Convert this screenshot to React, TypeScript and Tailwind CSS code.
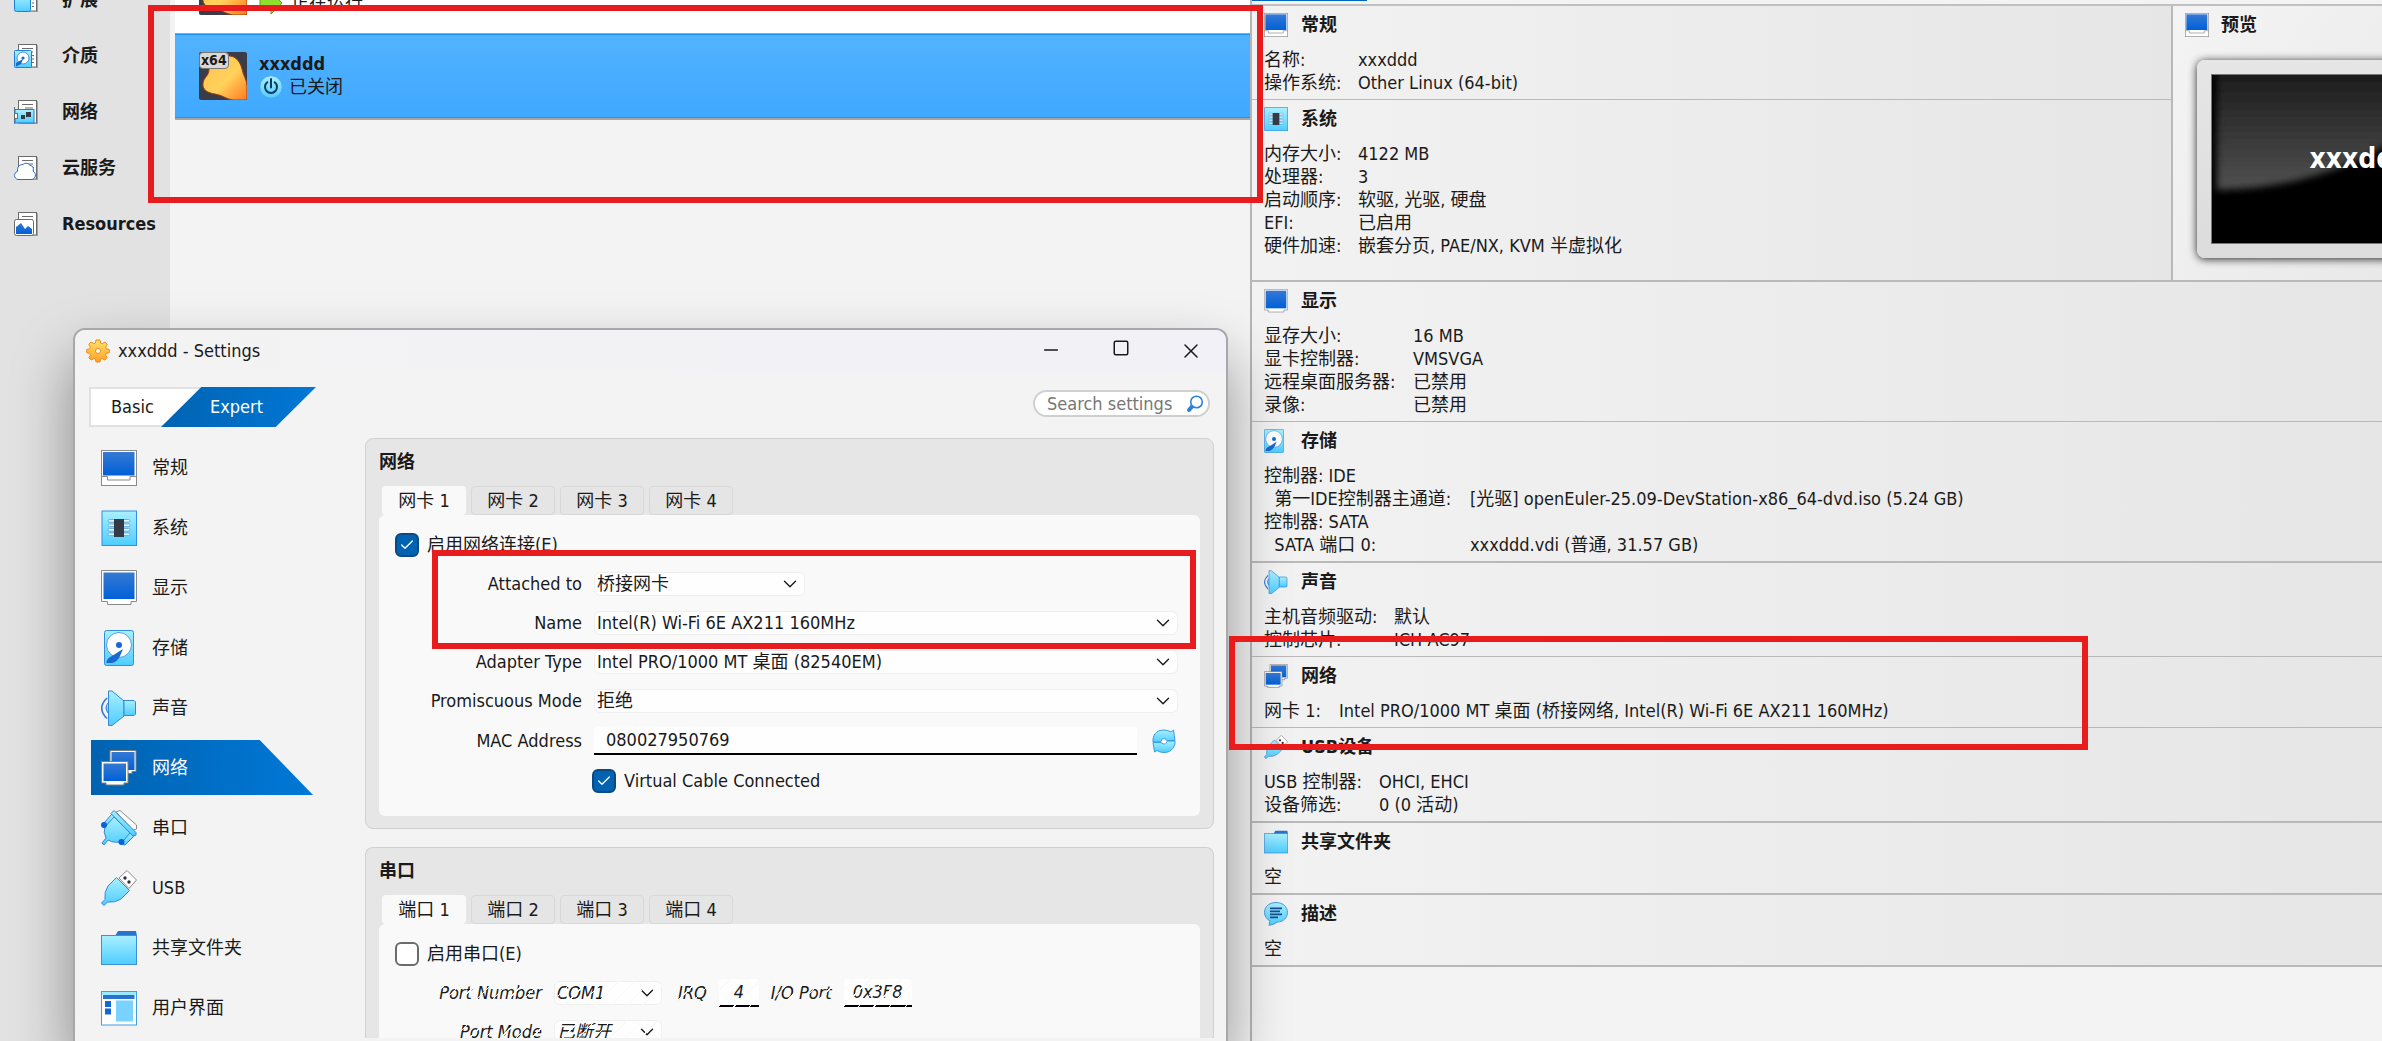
import type { ReactNode } from "react";
import { Check, ChevronDown, Minus, Square, X } from "lucide-react";

type IconProps = { className?: string };

/* Shared gradients, referenced by id from every icon below */
function IconDefs() {
  return (
    <svg width="0" height="0" className="absolute" aria-hidden="true">
      <defs>
        <linearGradient id="cyan" x1="0" y1="0" x2="0" y2="1">
          <stop offset="0" stopColor="#a9f0ff" />
          <stop offset="1" stopColor="#4fcdff" />
        </linearGradient>
        <linearGradient id="navy" x1="0" y1="0" x2="0" y2="1">
          <stop offset="0" stopColor="#3579d3" />
          <stop offset="1" stopColor="#0060d8" />
        </linearGradient>
        <linearGradient id="gold" x1="0" y1="0" x2="1" y2="1">
          <stop offset="0" stopColor="#ffbf4d" />
          <stop offset="0.55" stopColor="#ffd25c" />
          <stop offset="1" stopColor="#ff7a1c" />
        </linearGradient>
        <linearGradient id="gear" x1="0" y1="0" x2="0" y2="1">
          <stop offset="0" stopColor="#ffe36b" />
          <stop offset="1" stopColor="#ffa023" />
        </linearGradient>
      </defs>
    </svg>
  );
}

function GeneralIcon({ className }: IconProps) {
  return (
    <svg viewBox="0 0 36 36" className={className} aria-hidden="true">
      <rect x="0.5" y="0.5" width="35" height="35" fill="#fff" stroke="#8a8a8a" />
      <rect x="2" y="2" width="31.500" height="23.500" fill="url(#navy)" />
      <path d="M0.500 26.500H6.500V30H29V26.500H35.500" fill="none" stroke="#8a8a8a" />
    </svg>
  );
}

function DisplayIcon({ className }: IconProps) {
  return (
    <svg viewBox="0 0 36 36" className={className} aria-hidden="true">
      <path d="M0.500 0.500H35.500V31.500H30V34.500H6.500V31.500H0.500Z" fill="#fff" stroke="#8a8a8a" />
      <rect x="2.500" y="2.500" width="31" height="26.500" fill="url(#navy)" />
    </svg>
  );
}

function ChipIcon({ className }: IconProps) {
  return (
    <svg viewBox="0 0 36 36" className={className} aria-hidden="true">
      <rect x="1" y="1" width="34.500" height="34.500" fill="url(#cyan)" stroke="#2f8fe0" />
      {[9, 13.5, 18, 22.5].map((y) => (
        <rect key={y} x="7" y={y + 0.5} width="22" height="2.600" rx="1.300" fill="#e9f8ff" stroke="#5a9fd4" strokeWidth="0.800" />
      ))}
      <rect x="13" y="9" width="10" height="18" fill="#343b47" />
    </svg>
  );
}

function DiskIcon({ className }: IconProps) {
  return (
    <svg viewBox="0 0 30 36" className={className} aria-hidden="true">
      <rect x="0.500" y="0.500" width="29" height="35" rx="2" fill="url(#cyan)" stroke="#2f8fe0" />
      <circle cx="15" cy="15" r="12.500" fill="#fff" stroke="#5b9bd8" />
      <path d="M19 19 16 26Q13 32 8 33L2.500 33Q2 29 8 26Z" fill="#1668d2" />
      <circle cx="15" cy="15" r="3" fill="#1668d2" />
    </svg>
  );
}

function SpeakerIcon({ className }: IconProps) {
  return (
    <svg viewBox="0 0 36 36" className={className} aria-hidden="true">
      <path d="M6 8Q-4.500 18 6 28.500" fill="none" stroke="#2d77d8" strokeWidth="1.600" />
      <path d="M8 13H7Q3 18 7 23H8Z" fill="url(#cyan)" stroke="#2d77d8" />
      <path d="M7.500 1H11L23 11V26L11 35.500H7.500Z" fill="url(#cyan)" stroke="#3587d8" />
      <path d="M23 10.500H33L34.500 12V24L33 25.500H23Z" fill="url(#cyan)" stroke="#3587d8" />
    </svg>
  );
}

function NetworkIcon({ className }: IconProps) {
  return (
    <svg viewBox="0 0 36 36" className={className} aria-hidden="true">
      <path d="M9 0.500H35V21.500H31V23.500H9Z" fill="#fff" stroke="#7c7c7c" />
      <rect x="10.500" y="2" width="23" height="18" fill="url(#navy)" />
      <path d="M0.500 11.500H27V33H23V35H5V33H0.500Z" fill="#fff" stroke="#7c7c7c" />
      <rect x="2.500" y="13.500" width="22.500" height="17.500" fill="url(#navy)" />
    </svg>
  );
}

function SerialIcon({ className }: IconProps) {
  return (
    <svg viewBox="0 0 36 36" className={className} aria-hidden="true">
      <path d="M15 2 19 0.500 35.500 15V19L32 20Z" fill="#fff" stroke="#8a8a8a" />
      <path d="M2 17V14L11 4 16 8 6 18Z" fill="url(#cyan)" stroke="#3587d8" />
      <path d="M30 21 34 25 24 35 19 34V30Z" fill="url(#cyan)" stroke="#3587d8" />
      <path d="M13 7 29 23 22 31Q14 34 7 30L3 35 1 33 5 28Q2 22 4 17Z" fill="url(#cyan)" stroke="#3587d8" />
      <path d="M10 3.500 13 0.500 35 22.500V25L32 26Z" fill="url(#cyan)" stroke="#3587d8" />
      <circle cx="3" cy="15" r="3" fill="#0a62d6" />
      <circle cx="20.500" cy="32" r="3" fill="#0a62d6" />
    </svg>
  );
}

function UsbIcon({ className }: IconProps) {
  return (
    <svg viewBox="0 0 36 36" className={className} aria-hidden="true">
      <path d="M18 8 26 0.500 35.500 10 28 18.500Z" fill="#fff" stroke="#8a8a8a" />
      <circle cx="24" cy="8" r="1.700" fill="#333" />
      <circle cx="28" cy="12" r="1.700" fill="#333" />
      <path d="M15.500 7.500 28.500 20.500 20 29Q14 33 6.500 32L3 35.500 0.500 33 4 29.500Q3 22 7 16Z" fill="url(#cyan)" stroke="#3587d8" />
    </svg>
  );
}

function FolderIcon({ className }: IconProps) {
  return (
    <svg viewBox="0 0 36 36" className={className} aria-hidden="true">
      <path d="M14 6 17 1H35L36 6Z" fill="#2a72d0" />
      <rect x="0.500" y="5.500" width="35" height="29" fill="url(#cyan)" stroke="#3f8ed8" />
    </svg>
  );
}

function InterfaceIcon({ className }: IconProps) {
  return (
    <svg viewBox="0 0 36 36" className={className} aria-hidden="true">
      <rect x="0.500" y="1.500" width="35" height="33.500" fill="#fff" stroke="#3f9fe0" />
      <rect x="1" y="2" width="34" height="3" fill="#9beaff" />
      <rect x="2" y="5" width="31.500" height="4" fill="#2a72d0" />
      <rect x="4" y="11" width="6" height="6" fill="#1668d2" />
      <rect x="4" y="18.500" width="6" height="6" fill="#1668d2" />
      <rect x="15" y="10.500" width="17" height="21" fill="#79d2ff" />
    </svg>
  );
}

function DescriptionIcon({ className }: IconProps) {
  return (
    <svg viewBox="0 0 36 36" className={className} aria-hidden="true">
      <path d="M18 0.800C28 0.800 35.200 7 35.200 15.500C35.200 24 29 30 20 30Q15 34 7.500 35L9 28.500C4 26 0.800 21 0.800 15.500C0.800 7 8 0.800 18 0.800Z" fill="url(#cyan)" stroke="#4a97dc" strokeWidth="1.500" />
      <path d="M9 9.500H27M9 14H24M9 18.500H27M9 23H21" stroke="#184f8c" strokeWidth="2.800" />
    </svg>
  );
}

function GearIcon({ className }: IconProps) {
  return (
    <svg viewBox="0 0 24 24" className={className} aria-hidden="true">
      <path
        d="M10 1h4l.6 3 1.600.7L19 3l2.300 2.400-1.600 2.700.6 1.700 3 .7v3.200l-3 .7-.7 1.700 1.500 2.600-2.300 2.400-2.700-1.600-1.600.7L14 23h-4l-.6-2.800-1.600-.7-2.700 1.600-2.300-2.400 1.600-2.600-.7-1.700-3-.7v-3.200l3-.7.6-1.700-1.600-2.700L5 3l2.800 1.700 1.600-.7z"
        fill="url(#gear)"
        stroke="#f08a1d"
      />
      <circle cx="12" cy="12" r="2.500" fill="#fff" stroke="#f08a1d" />
    </svg>
  );
}

function PowerIcon({ className }: IconProps) {
  return (
    <svg viewBox="0 0 24 24" className={className} aria-hidden="true">
      <circle cx="12" cy="12" r="11.300" fill="url(#cyan)" stroke="#4fa6e6" />
      <path d="M8.300 7.200A6 6 0 1 0 15.700 7.200M12 4V12.500" fill="none" stroke="#10385f" strokeWidth="2" strokeLinecap="round" />
    </svg>
  );
}

function RunningIcon({ className }: IconProps) {
  return (
    <svg viewBox="0 0 24 24" className={className} aria-hidden="true">
      <path d="M1 7H12V1L23 12 12 23V17H1Z" fill="#8fe02c" stroke="#5da312" />
    </svg>
  );
}

function MagnifierIcon({ className }: IconProps) {
  return (
    <svg viewBox="0 0 18 18" className={className} aria-hidden="true">
      <path d="M6.500 11 3 15" stroke="#2b7ed9" strokeWidth="4" strokeLinecap="round" />
      <circle cx="10.500" cy="7" r="5.800" fill="#fff" stroke="#2b7ed9" strokeWidth="1.600" />
    </svg>
  );
}

function RefreshIcon({ className }: IconProps) {
  return (
    <svg viewBox="0 0 24 24" className={className} aria-hidden="true">
      <path d="M1 13V10C2 4 6 1 12 1Q16 1 19 3L21.500 1 23 11.500H15Q13 8.500 10 10L9 13Z" fill="url(#cyan)" stroke="#3b9ae0" />
      <path d="M23 12V14C22 20 18 23.500 12 23.500Q8 23.500 5 21.500L2.500 23 1 13.500H9Q11 16 14 14.500L15 12Z" fill="url(#cyan)" stroke="#3b9ae0" />
      <path d="M9 13 11 10 12 12 15 12 13 15 12 13Z" fill="#fff" />
    </svg>
  );
}

function VmIcon({ className }: IconProps) {
  return (
    <svg viewBox="0 0 48 48" className={className} aria-hidden="true">
      <rect width="48" height="48" rx="2" fill="#3a3d49" />
      <path d="M28 4C36 3 41 9 43 17C44 23 48 28 48 34V48H34C27 47 23 43 16 42C9 41 3 38 4 31C5 25 10 24 10 17C10 9 18 5 28 4Z" fill="url(#gold)" stroke="#9c3d12" />
    </svg>
  );
}

/* A sheet of paper with the tool's own mark laid over its left half */
function ToolIcon({ children }: { children: ReactNode }) {
  return (
    <svg viewBox="0 0 24 24" className="h-6 w-6 shrink-0" aria-hidden="true">
      <path d="M5.500 1.500H23.500V24H7" fill="none" stroke="#a5a5a5" />
      <rect x="4.500" y="0.500" width="18" height="22.500" fill="#fff" stroke="#6b6b6b" />
      <path d="M8 4.500H19M11 8H19M18 11.500H20M18 15H20M18 18.500H20" stroke="#6b6b6b" />
      {children}
    </svg>
  );
}

const tools = [
  {
    label: "扩展",
    icon: <rect x="0.500" y="6.500" width="16" height="17" rx="2" fill="url(#cyan)" stroke="#1f7fd6" />,
  },
  {
    label: "介质",
    icon: (
      <>
        <rect x="0.500" y="6.500" width="17" height="17" rx="1" fill="url(#cyan)" stroke="#1f7fd6" />
        <circle cx="9" cy="14" r="6" fill="#fff" stroke="#4b8fd8" />
        <path d="M9 15 7 20 2 22.500V19Z" fill="#1668d2" />
        <circle cx="9" cy="14" r="1.600" fill="#1668d2" />
      </>
    ),
  },
  {
    label: "网络",
    icon: (
      <>
        <path d="M0.500 7V24" stroke="#6b6b6b" />
        <rect x="1" y="9.500" width="19" height="13.500" fill="url(#cyan)" stroke="#1f7fd6" />
        <rect x="0.500" y="13.500" width="3" height="5" fill="#fff" stroke="#6b6b6b" />
        <rect x="12" y="12" width="5" height="5" fill="#333a44" />
        <rect x="7" y="15" width="4" height="4" fill="#333a44" />
      </>
    ),
  },
  {
    label: "云服务",
    icon: (
      <path
        d="M4 23.500C-0.500 22.500-0.500 16.500 3.500 15.500C3 10 6 8.500 9 8.500C11 6.500 15 7 16 9.500C19 9.500 20 12.500 19 15C23 18 21.500 22.500 18 23.500Z"
        fill="#fff"
        stroke="#1f6fd2"
      />
    ),
  },
  {
    label: "Resources",
    icon: (
      <>
        <rect x="0.500" y="7.500" width="19" height="16" rx="2" fill="#fff" stroke="#6b6b6b" />
        <path d="M2 22V15L7 11 11 17 14 14 18 17V22Z" fill="url(#navy)" />
      </>
    ),
  },
];

const settingsPages = [
  { label: "常规", Icon: GeneralIcon },
  { label: "系统", Icon: ChipIcon },
  { label: "显示", Icon: DisplayIcon },
  { label: "存储", Icon: DiskIcon },
  { label: "声音", Icon: SpeakerIcon },
  { label: "网络", Icon: NetworkIcon },
  { label: "串口", Icon: SerialIcon },
  { label: "USB", Icon: UsbIcon },
  { label: "共享文件夹", Icon: FolderIcon },
  { label: "用户界面", Icon: InterfaceIcon },
];

function ToolsSidebar() {
  return (
    <nav className="w-[170px] shrink-0 bg-[#e2e2e2]">
      <div className="-mt-7 flex flex-col">
        {tools.map((tool) => (
          <a key={tool.label} href="#tools" className="flex h-14 items-center gap-6 pl-3.5 font-bold">
            <ToolIcon>{tool.icon}</ToolIcon>
            {tool.label}
          </a>
        ))}
      </div>
    </nav>
  );
}

function MachineList() {
  return (
    <main className="min-w-0 flex-1 pl-[5px]">
      <div className="flex h-[33px] items-end gap-3 bg-white pb-[18px] pl-6">
        <VmIcon className="h-12 w-12 shrink-0" />
        <div className="flex items-center gap-2">
          <RunningIcon className="h-6 w-6" />
          <span>正在运行</span>
        </div>
      </div>
      <div className="border-t border-b-2 border-[#a5a5a5]">
        <a
          href="#machine"
          className="flex h-[84px] items-center gap-3 border-y border-[#1592fb] bg-linear-to-b from-[#52b2ff] to-[#3fa9ff] pl-6"
        >
          <span className="relative shrink-0">
            <VmIcon className="h-12 w-12" />
            <span className="absolute top-0 left-0 rounded border border-[#777] bg-[#dcd9d4] px-px text-[14px] leading-[15px] font-bold">
              x64
            </span>
          </span>
          <span className="flex flex-col">
            <span className="leading-[22px] font-bold">xxxddd</span>
            <span className="flex items-center gap-1.5">
              <PowerIcon className="h-6 w-6" />
              已关闭
            </span>
          </span>
        </a>
      </div>
    </main>
  );
}

type Row = [string, string?];

type DetailSectionProps = {
  title: string;
  icon: ReactNode;
  rows: Row[];
  labelWidth?: string;
  className?: string;
};

function DetailSection({ title, icon, rows, labelWidth = "w-[94px]", className = "border-b" }: DetailSectionProps) {
  return (
    <section
      className={`border-[#b9b9b9] bg-linear-to-r from-[#f2f2f2] to-[#e6e6e6] pt-[7px] pb-[5px] pl-3 ${className}`}
    >
      <h2 className="flex h-6 items-center font-bold">
        <span className="w-[37px]">{icon}</span>
        {title}
      </h2>
      <table className="mt-[11px] leading-[23px]">
        <tbody>
          {rows.map(([label, value]) =>
            value ? (
              <tr key={label}>
                <th scope="row" className={`p-0 text-left font-normal whitespace-pre ${labelWidth}`}>
                  {label}
                </th>
                <td className="p-0 whitespace-nowrap">{value}</td>
              </tr>
            ) : (
              <tr key={label}>
                <td colSpan={2} className="p-0">
                  {label}
                </td>
              </tr>
            ),
          )}
        </tbody>
      </table>
    </section>
  );
}

function Preview() {
  return (
    <section className="w-[211px] shrink-0 overflow-hidden border-b-2 border-l-2 border-[#b9b9b9] bg-linear-to-br from-[#f4f4f4] to-[#e9e9e9] pt-[7px] pl-3">
      <h2 className="flex h-6 items-center gap-3 font-bold">
        <GeneralIcon className="h-6 w-6" />
        预览
      </h2>
      <div className="mt-[23px] ml-3 w-[328px] rounded-lg bg-linear-to-b from-[#e6e6e6] to-[#dcdcdc] p-3.5 shadow-[0_1px_8px_rgba(0,0,0,0.85)]">
        <div className="relative flex h-[170px] items-center justify-center overflow-hidden border border-[#777] bg-black">
          <svg viewBox="0 0 300 170" className="absolute inset-0 h-full w-full" aria-hidden="true">
            <defs>
              <linearGradient id="gloss" x1="0" y1="0" x2="0" y2="1">
                <stop offset="0" stopColor="#181818" />
                <stop offset="1" stopColor="#505050" />
              </linearGradient>
              <filter id="soft">
                <feGaussianBlur stdDeviation="4" />
              </filter>
            </defs>
            <path d="M4 -10H310V-10C260 20 200 60 150 85Q80 116 4 116Z" fill="url(#gloss)" filter="url(#soft)" />
          </svg>
          <span className="relative text-[28px] font-bold text-white">xxxddd</span>
        </div>
      </div>
    </section>
  );
}

function DetailsPane() {
  return (
    <aside className="flex w-[1132px] shrink-0 flex-col border-l-2 border-[#b5b5b5]">
      <div className="h-1.5 border-b-2 border-[#c0c0c0]">
        <div className="h-px w-[115px] bg-[#0067c0]" />
      </div>
      <div className="flex">
        <div className="flex min-w-0 flex-1 flex-col">
          <DetailSection
            title="常规"
            icon={<GeneralIcon className="h-6 w-6" />}
            rows={[
              ["名称:", "xxxddd"],
              ["操作系统:", "Other Linux (64-bit)"],
            ]}
          />
          <DetailSection
            title="系统"
            icon={<ChipIcon className="h-6 w-6" />}
            className="h-[182px] border-b-2"
            rows={[
              ["内存大小:", "4122 MB"],
              ["处理器:", "3"],
              ["启动顺序:", "软驱, 光驱, 硬盘"],
              ["EFI:", "已启用"],
              ["硬件加速:", "嵌套分页, PAE/NX, KVM 半虚拟化"],
            ]}
          />
        </div>
        <Preview />
      </div>
      <DetailSection
        title="显示"
        icon={<DisplayIcon className="h-6 w-6" />}
        labelWidth="w-[149px]"
        rows={[
          ["显存大小:", "16 MB"],
          ["显卡控制器:", "VMSVGA"],
          ["远程桌面服务器:", "已禁用"],
          ["录像:", "已禁用"],
        ]}
      />
      <DetailSection
        title="存储"
        icon={<DiskIcon className="h-6 w-5" />}
        labelWidth="w-[206px]"
        className="border-b-2"
        rows={[
          ["控制器: IDE"],
          ["  第一IDE控制器主通道:", "[光驱] openEuler-25.09-DevStation-x86_64-dvd.iso (5.24 GB)"],
          ["控制器: SATA"],
          ["  SATA 端口 0:", "xxxddd.vdi (普通, 31.57 GB)"],
        ]}
      />
      <DetailSection
        title="声音"
        icon={<SpeakerIcon className="h-6 w-6" />}
        labelWidth="w-[130px]"
        rows={[
          ["主机音频驱动:", "默认"],
          ["控制芯片:", "ICH AC97"],
        ]}
      />
      <DetailSection
        title="网络"
        icon={<NetworkIcon className="h-6 w-6" />}
        labelWidth="w-[75px]"
        rows={[["网卡 1:", "Intel PRO/1000 MT 桌面 (桥接网络, Intel(R) Wi-Fi 6E AX211 160MHz)"]]}
      />
      <DetailSection
        title="USB设备"
        icon={<UsbIcon className="h-6 w-6" />}
        labelWidth="w-[115px]"
        className="border-b-2"
        rows={[
          ["USB 控制器:", "OHCI, EHCI"],
          ["设备筛选:", "0 (0 活动)"],
        ]}
      />
      <DetailSection
        title="共享文件夹"
        icon={<FolderIcon className="h-6 w-6" />}
        className="border-b-2"
        rows={[["空"]]}
      />
      <DetailSection
        title="描述"
        icon={<DescriptionIcon className="h-6 w-6" />}
        className="border-b-2"
        rows={[["空"]]}
      />
    </aside>
  );
}

function CheckField({ label, checked = false }: { label: string; checked?: boolean }) {
  return (
    <label className="flex items-center gap-2">
      <span className="relative flex">
        <input
          type="checkbox"
          defaultChecked={checked}
          className="peer h-6 w-6 appearance-none rounded-md border-2 border-[#6b6b6b] bg-white checked:border-[#0a4a80] checked:bg-[#0063b1]"
        />
        <Check
          size={16}
          strokeWidth={2}
          aria-hidden="true"
          className="pointer-events-none absolute inset-0 m-auto hidden text-white peer-checked:block"
        />
      </span>
      {label}
    </label>
  );
}

type SelectFieldProps = { id: string; value: string; className?: string; disabled?: boolean };

function SelectField({ id, value, className = "w-full", disabled = false }: SelectFieldProps) {
  return (
    <span className={`relative flex items-center ${className}`}>
      <select
        id={id}
        disabled={disabled}
        className="h-6 w-full appearance-none rounded-md border border-[#efefef] bg-[#fefefe] pl-0.5 leading-[22px] opacity-100"
      >
        <option>{value}</option>
      </select>
      <ChevronDown size={22} strokeWidth={1.5} aria-hidden="true" className="pointer-events-none absolute right-1" />
    </span>
  );
}

type FormRowProps = { id: string; label: string; className?: string; children: ReactNode };

function FormRow({ id, label, className = "h-[39px]", children }: FormRowProps) {
  return (
    <div className={`flex items-center gap-3 ${className}`}>
      <label htmlFor={id} className="w-[187px] shrink-0 text-right">
        {label}
      </label>
      <div className="flex min-w-0 flex-1 items-center gap-[15px]">{children}</div>
    </div>
  );
}

type GroupProps = { title: string; tabs: string[]; className?: string; children: ReactNode };

function SettingsGroup({ title, tabs, className = "", children }: GroupProps) {
  return (
    <section
      className={`flex flex-col border border-[#d0d0d0] bg-[#e6e6e6] px-[13px] pt-3 ${className}`}
    >
      <h3 className="leading-[22px] font-bold">{title}</h3>
      <div role="tablist" className="mt-[13px] ml-[3px] flex gap-[5px]">
        {tabs.map((tab, i) => (
          <button
            key={tab}
            type="button"
            role="tab"
            aria-selected={i === 0}
            className={`h-[29px] w-[84px] rounded-sm ${
              i === 0 ? "bg-[#f9f9f9]" : "border border-[#d8d8d8] bg-[#e5e5e5]"
            }`}
          >
            {tab}
          </button>
        ))}
      </div>
      <div className="flex-1 rounded-md bg-[#f9f9f9] px-4 pt-2.5 pb-4">{children}</div>
    </section>
  );
}

/* Diagonal strokes that grey out a row of disabled fields */
function Hatch() {
  return (
    <span className="pointer-events-none absolute inset-0 bg-[repeating-linear-gradient(135deg,transparent_0px,transparent_10px,#f9f9f9_10px,#f9f9f9_11px)]" />
  );
}

function NetworkGroup() {
  return (
    <SettingsGroup title="网络" tabs={["网卡 1", "网卡 2", "网卡 3", "网卡 4"]} className="rounded-lg pb-3">
      <div className="flex h-[39px] items-center">
        <CheckField label="启用网络连接(E)" checked />
      </div>
      <div className="pr-1.5">
        <FormRow id="attached" label="Attached to">
          <SelectField id="attached" value="桥接网卡" className="w-[211px]" />
        </FormRow>
        <FormRow id="name" label="Name">
          <SelectField id="name" value="Intel(R) Wi-Fi 6E AX211 160MHz" />
        </FormRow>
        <FormRow id="adapter" label="Adapter Type">
          <SelectField id="adapter" value="Intel PRO/1000 MT 桌面 (82540EM)" />
        </FormRow>
        <FormRow id="promiscuous" label="Promiscuous Mode">
          <SelectField id="promiscuous" value="拒绝" />
        </FormRow>
        <FormRow id="mac" label="MAC Address" className="h-[41px]">
          <input
            id="mac"
            defaultValue="080027950769"
            className="h-7 min-w-0 flex-1 rounded-t border-b-2 border-black bg-[#fefefe] pl-3"
          />
          <button type="button" aria-label="Refresh" className="mr-0.5">
            <RefreshIcon className="h-6 w-6" />
          </button>
        </FormRow>
      </div>
      <div className="flex h-[39px] items-center pl-[197px]">
        <CheckField label="Virtual Cable Connected" checked />
      </div>
    </SettingsGroup>
  );
}

function SerialGroup() {
  return (
    <SettingsGroup
      title="串口"
      tabs={["端口 1", "端口 2", "端口 3", "端口 4"]}
      className="mt-[18px] min-h-0 flex-1 overflow-hidden rounded-t-lg border-b-0"
    >
      <div className="flex h-[39px] items-center">
        <CheckField label="启用串口(E)" />
      </div>
      <div className="relative w-fit italic">
        <div className="flex h-[39px] items-center gap-3">
          <label htmlFor="port" className="w-[147px] text-right">
            Port Number
          </label>
          <SelectField id="port" value="COM1" className="w-[108px]" disabled />
          <label htmlFor="irq" className="ml-1">
            IRQ
          </label>
          <input
            id="irq"
            disabled
            defaultValue="4"
            className="h-7 w-10 rounded-t border-b-2 border-black bg-[#fefefe] text-center"
          />
          <label htmlFor="ioport">I/O Port</label>
          <input
            id="ioport"
            disabled
            defaultValue="0x3F8"
            className="h-7 w-[68px] rounded-t border-b-2 border-black bg-[#fefefe] text-center"
          />
        </div>
        <div className="flex h-[39px] items-center gap-3">
          <label htmlFor="mode" className="w-[147px] text-right">
            Port Mode
          </label>
          <SelectField id="mode" value="已断开" className="w-[108px]" disabled />
        </div>
        <Hatch />
      </div>
    </SettingsGroup>
  );
}

function SettingsDialog() {
  return (
    <div
      role="dialog"
      aria-label="xxxddd - Settings"
      className="absolute top-[328px] bottom-0 left-[73px] flex w-[1155px] flex-col overflow-hidden rounded-t-xl border-2 border-b-0 border-[#a8a8a8] bg-[#f3f3f3] shadow-[0_30px_60px_rgba(0,0,0,0.4)]"
    >
      <header className="flex h-[42px] shrink-0 items-center justify-between bg-linear-to-r from-[#f3f3f3] to-[#f2f1f7] pl-[11px]">
        <div className="flex items-center gap-2">
          <GearIcon className="h-6 w-6" />
          <h1>xxxddd - Settings</h1>
        </div>
        <div className="flex">
          <button type="button" aria-label="Minimize" className="flex w-[70px] justify-center">
            <Minus size={22} strokeWidth={1.5} />
          </button>
          <button type="button" aria-label="Maximize" className="flex w-[70px] justify-center">
            <Square size={18} strokeWidth={2} />
          </button>
          <button type="button" aria-label="Close" className="flex w-[70px] justify-center">
            <X size={24} strokeWidth={1.5} />
          </button>
        </div>
      </header>
      <div className="flex min-h-0 flex-1">
        <div className="w-[290px] shrink-0 pt-[15px] pl-3.5">
          <div className="flex h-10">
            <button type="button" className="w-[112px] border-2 border-[#e1e1e1] bg-white pl-5 text-left">
              Basic
            </button>
            <button
              type="button"
              className="-ml-10 w-[155px] bg-linear-to-r from-[#0063b1] to-[#0078d7] pr-1 text-white [clip-path:polygon(26%_0,100%_0,74%_100%,0_100%)]"
            >
              Expert
            </button>
          </div>
          <nav className="mt-[13px] flex flex-col gap-[5px] pl-0.5">
            {settingsPages.map(({ label, Icon }) => (
              <a
                key={label}
                href="#page"
                className={`flex h-[55px] w-[222px] items-center gap-[15px] pl-2.5 ${
                  label === "网络"
                    ? "bg-linear-to-r from-[#0063b1] to-[#0078d7] text-white [clip-path:polygon(0_0,76%_0,100%_100%,0_100%)]"
                    : ""
                }`}
              >
                <Icon className="h-9 w-9" />
                {label}
              </a>
            ))}
          </nav>
        </div>
        <div className="flex min-w-0 flex-1 flex-col pt-[18px] pr-3 pb-[3px]">
          <label className="mr-1 flex h-[27px] w-[177px] shrink-0 items-center self-end rounded-full border-2 border-[#cfcfcf] bg-white pr-1 pl-3">
            <input
              aria-label="Search settings"
              placeholder="Search settings"
              className="min-w-0 flex-1 outline-none placeholder:text-[#777]"
            />
            <MagnifierIcon className="h-[18px] w-[18px] shrink-0" />
          </label>
          <div className="mt-[21px] flex min-h-0 flex-1 flex-col">
            <NetworkGroup />
            <SerialGroup />
          </div>
        </div>
      </div>
    </div>
  );
}

export default function App() {
  return (
    <div className="relative flex h-screen w-full overflow-hidden bg-[#f3f3f3] font-['DejaVu_Sans_Condensed','Noto_Sans_CJK_SC',sans-serif] text-[18px] leading-[22px] text-[#1a1a1a]">
      <IconDefs />
      <ToolsSidebar />
      <MachineList />
      <DetailsPane />
      <SettingsDialog />
      {/* Callouts over the machine, its adapter settings and the network summary */}
      <div className="pointer-events-none absolute top-[5px] left-[148px] h-[198px] w-[1115px] border-6 border-[#e81c1c]" />
      <div className="pointer-events-none absolute top-[550px] left-[432px] h-[99px] w-[764px] border-6 border-[#e81c1c]" />
      <div className="pointer-events-none absolute top-[636px] left-[1229px] h-[114px] w-[859px] border-6 border-[#e81c1c]" />
    </div>
  );
}
